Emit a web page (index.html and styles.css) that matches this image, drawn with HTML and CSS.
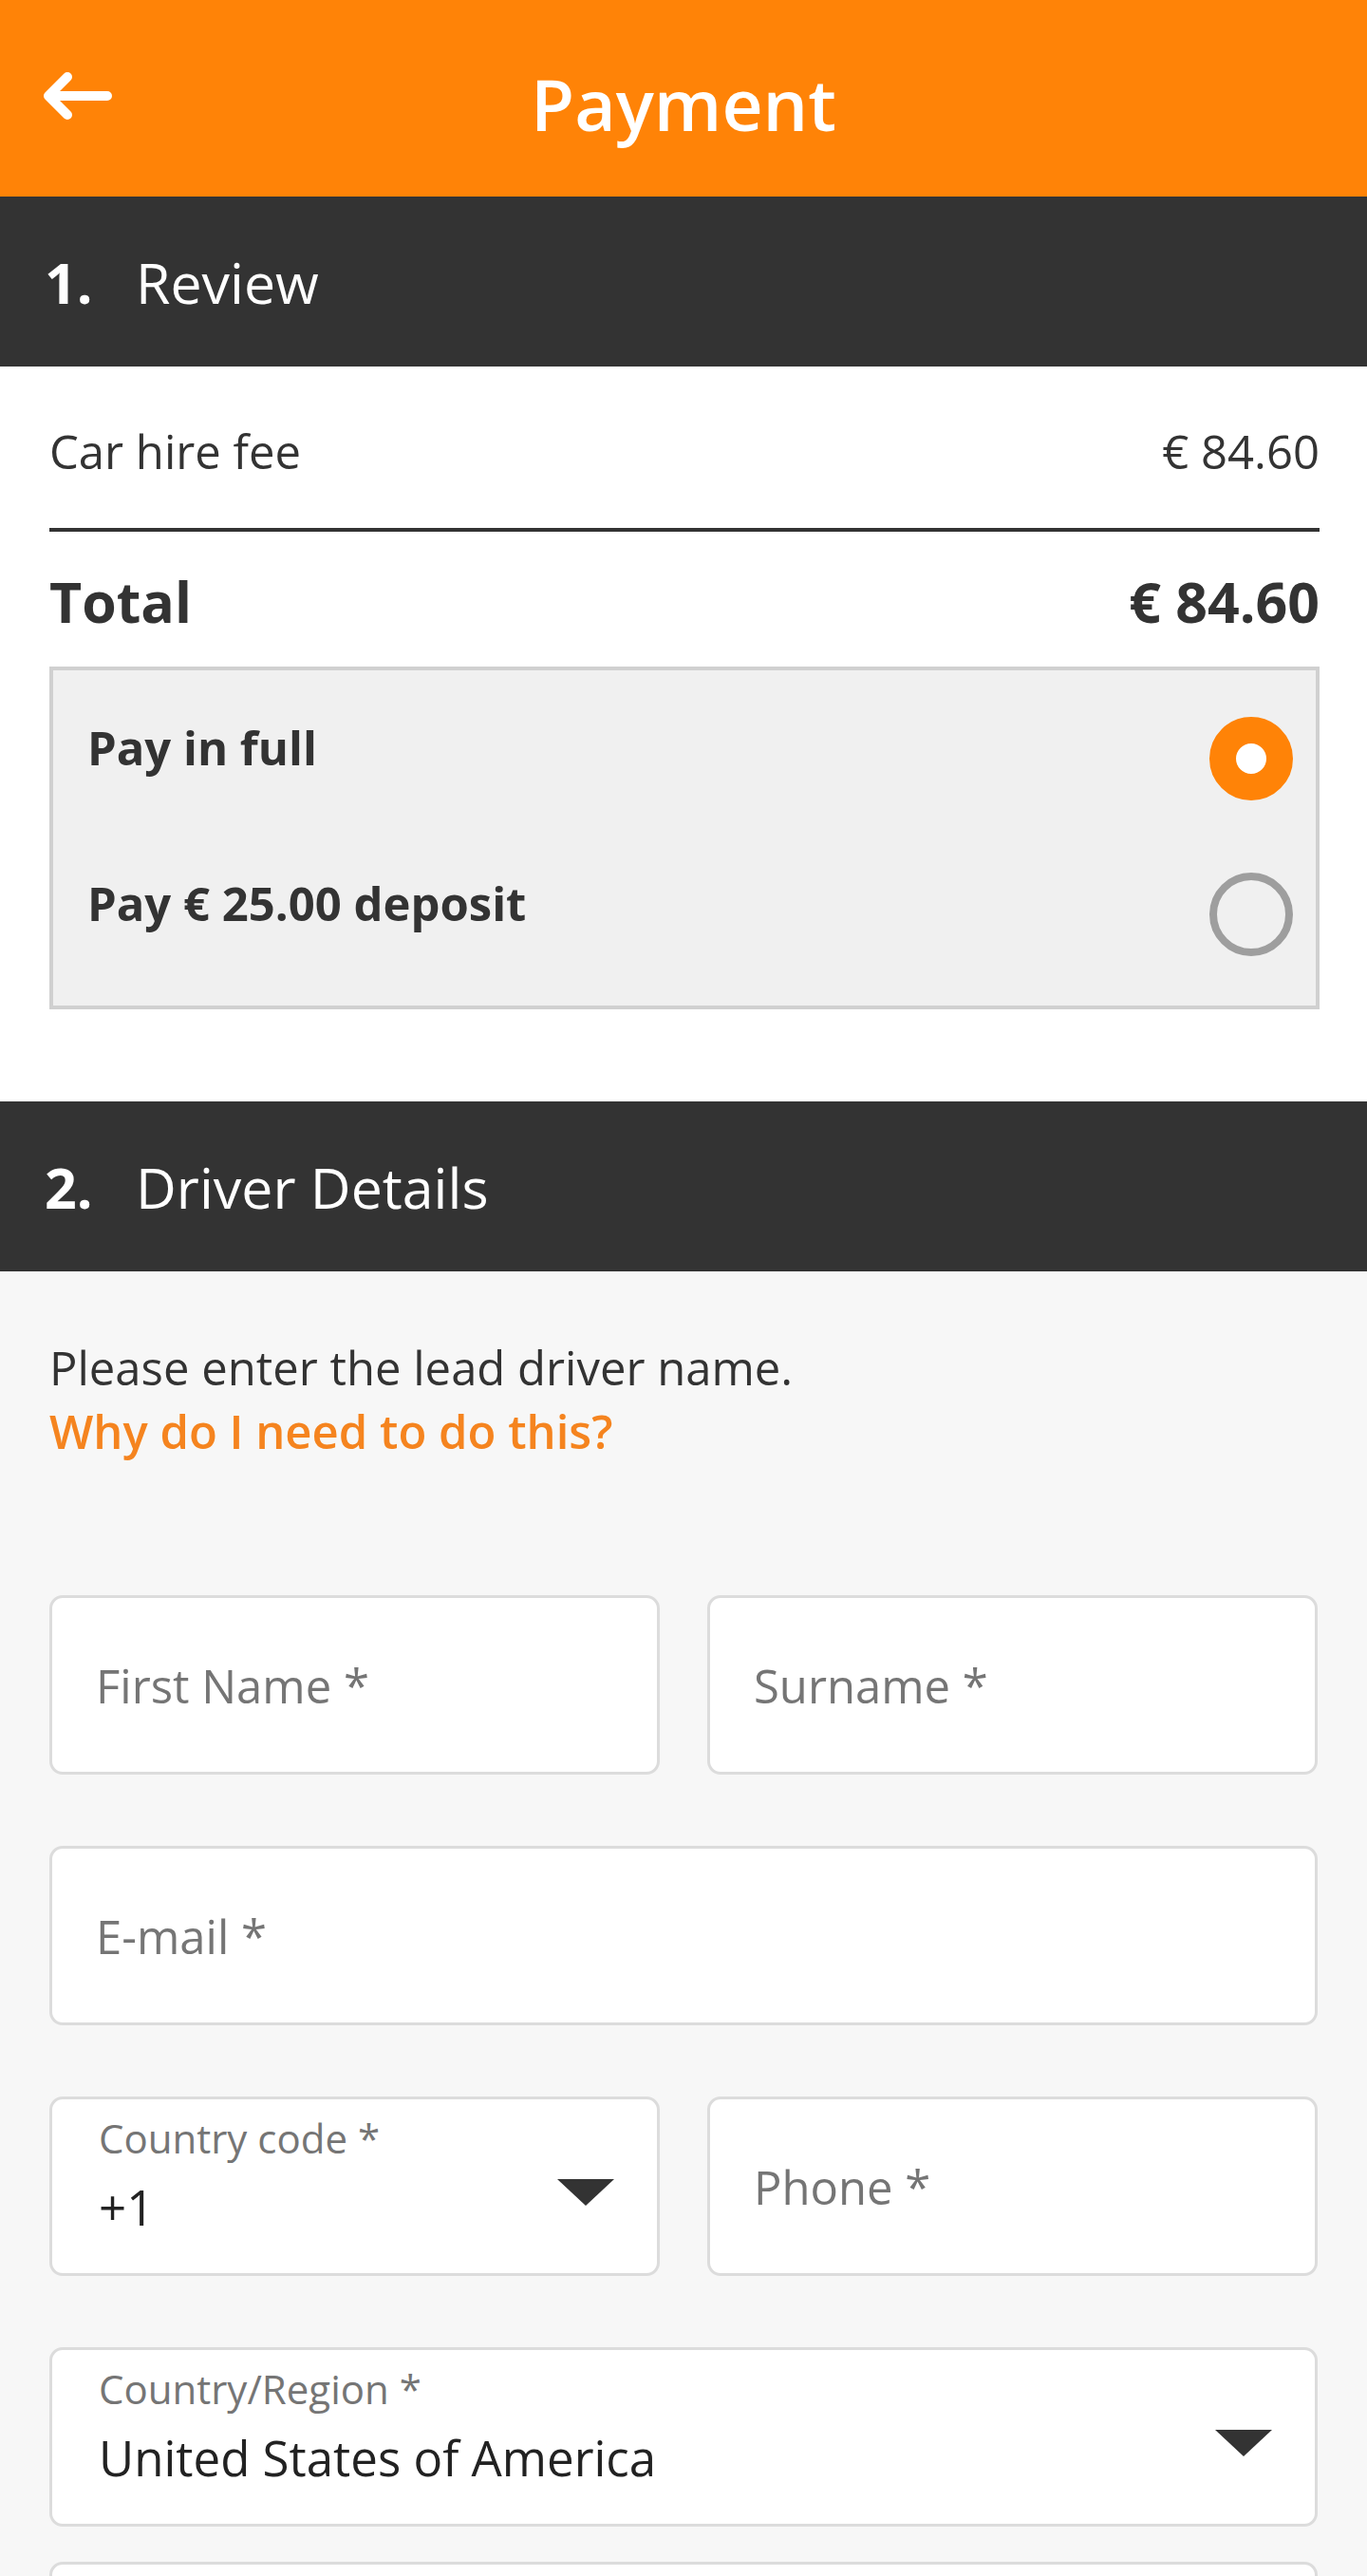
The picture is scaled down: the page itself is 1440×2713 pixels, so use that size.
FILE: index.html
```html
<!DOCTYPE html>
<html lang="en">

<head>
    <meta charset="UTF-8">
    <meta name="viewport" content="width=device-width, initial-scale=1.0">
    <title>Payment</title>
    <link rel="stylesheet" href="styles.css">
</head>

<body>
    <header class="topbar">
        <button class="back" aria-label="Back">
            <svg width="76" height="58" viewBox="0 0 76 58">
                <path d="M70 29H8M28 9L8 29l20 20" fill="none" stroke="#fff" stroke-width="10"
                    stroke-linecap="round" stroke-linejoin="round" />
            </svg>
        </button>
        <h1 class="title">Payment</h1>
        <span></span>
    </header>

    <section class="step">
        <h2 class="step-head"><span class="step-num">1.</span>Review</h2>
        <div class="review">
            <div class="fee-row">
                <span>Car hire fee</span>
                <span>€ 84.60</span>
            </div>
            <div class="total-row">
                <span>Total</span>
                <span>€ 84.60</span>
            </div>
            <div class="pay-options">
                <div class="pay-option">
                    <span class="pay-label">Pay in full</span>
                    <span class="radio checked"></span>
                </div>
                <div class="pay-option">
                    <span class="pay-label">Pay € 25.00 deposit</span>
                    <span class="radio"></span>
                </div>
            </div>
        </div>
    </section>

    <section class="step">
        <h2 class="step-head"><span class="step-num">2.</span>Driver Details</h2>
        <div class="driver">
            <p class="intro">
                Please enter the lead driver name.<br>
                <a href="#" class="why">Why do I need to do this?</a>
            </p>

            <div class="fields">
                <div class="field-row two">
                    <div class="field"><span class="placeholder">First Name *</span></div>
                    <div class="field"><span class="placeholder">Surname *</span></div>
                </div>
                <div class="field-row">
                    <div class="field"><span class="placeholder">E-mail *</span></div>
                </div>
                <div class="field-row two">
                    <div class="field select">
                        <div class="select-text">
                            <span class="label">Country code *</span>
                            <span class="value">+1</span>
                        </div>
                        <span class="caret"></span>
                    </div>
                    <div class="field"><span class="placeholder">Phone *</span></div>
                </div>
                <div class="field-row">
                    <div class="field select">
                        <div class="select-text">
                            <span class="label">Country/Region *</span>
                            <span class="value">United States of America</span>
                        </div>
                        <span class="caret"></span>
                    </div>
                </div>
                <div class="field-row next">
                    <div class="field"></div>
                </div>
            </div>
        </div>
    </section>
</body>

</html>
```

FILE: styles.css
```css
body {
    margin: 0;
    font-family: "Open Sans", "Noto Sans", sans-serif;
    color: #333;
    background: #f7f7f7;
}

/* top bar */
.topbar {
    display: grid;
    grid-template-columns: 1fr auto 1fr;
    align-items: center;
    height: 207px;
    background: #ff8307;
}

.back {
    justify-self: start;
    display: flex;
    margin-left: 43px;
    margin-top: -5px;
    padding: 0;
    background: none;
    border: none;
    cursor: pointer;
}

.title {
    margin: 11px 0 0;
    font-size: 75px;
    font-weight: 600;
    line-height: 76px;
    color: #fff;
}

/* step headers */
.step-head {
    display: flex;
    align-items: center;
    height: 179px;
    margin: 0;
    padding-left: 47px;
    background: #333;
    color: #fff;
    font-size: 59px;
    font-weight: 400;
}

.step-num {
    width: 96px;
    font-weight: 700;
}

/* review */
.review {
    background: #fff;
    padding: 53px 50px 97px 52px;
}

.fee-row,
.total-row {
    display: flex;
    justify-content: space-between;
}

.fee-row {
    font-size: 49px;
    line-height: 72px;
    padding-bottom: 45px;
    border-bottom: 4px solid #333;
}

.total-row {
    margin-top: 29px;
    font-size: 59px;
    font-weight: 700;
    line-height: 88px;
}

.pay-options {
    margin-top: 25px;
    padding: 11px 24px 14px 36px;
    background: #f0f0f0;
    border: 4px solid #d0d0d0;
}

.pay-option {
    display: flex;
    align-items: center;
    justify-content: space-between;
    height: 164px;
}

.pay-label {
    margin-bottom: 24px;
    font-size: 49px;
    font-weight: 700;
    line-height: 72px;
}

.radio {
    width: 88px;
    height: 88px;
    box-sizing: border-box;
    border-radius: 50%;
    border: 8px solid #9e9e9e;
}

.radio.checked {
    border: 28px solid #ff8307;
    background: #fff;
}

/* driver details */
.driver {
    padding: 68px 52px 0;
}

.intro {
    margin: 0;
    font-size: 49px;
    line-height: 67px;
}

.why {
    color: #f5841f;
    font-weight: 600;
    text-decoration: none;
}

.fields {
    margin-top: 139px;
    display: flex;
    flex-direction: column;
    gap: 75px;
}

.field-row {
    display: grid;
    grid-template-columns: 1fr;
}

.field-row.two {
    grid-template-columns: 1fr 1fr;
    gap: 50px;
}

.field-row.next {
    margin-top: -38px;
}

.field {
    display: flex;
    align-items: center;
    height: 189px;
    box-sizing: border-box;
    padding: 0 45px 0 46px;
    background: #fff;
    border: 3px solid #dcdcdc;
    border-radius: 14px;
}

.placeholder {
    font-size: 49px;
    color: #757575;
}

.select-text {
    flex: 1;
    display: flex;
    flex-direction: column;
    margin-top: -25px;
    padding-left: 3px;
}

.label {
    font-size: 42px;
    line-height: 57px;
    color: #757575;
}

.value {
    margin-top: 11px;
    font-size: 51px;
    line-height: 67px;
    color: #222;
}

.caret {
    width: 0;
    height: 0;
    margin-top: 12px;
    border-left: 30px solid transparent;
    border-right: 30px solid transparent;
    border-top: 28px solid #333;
}
```
